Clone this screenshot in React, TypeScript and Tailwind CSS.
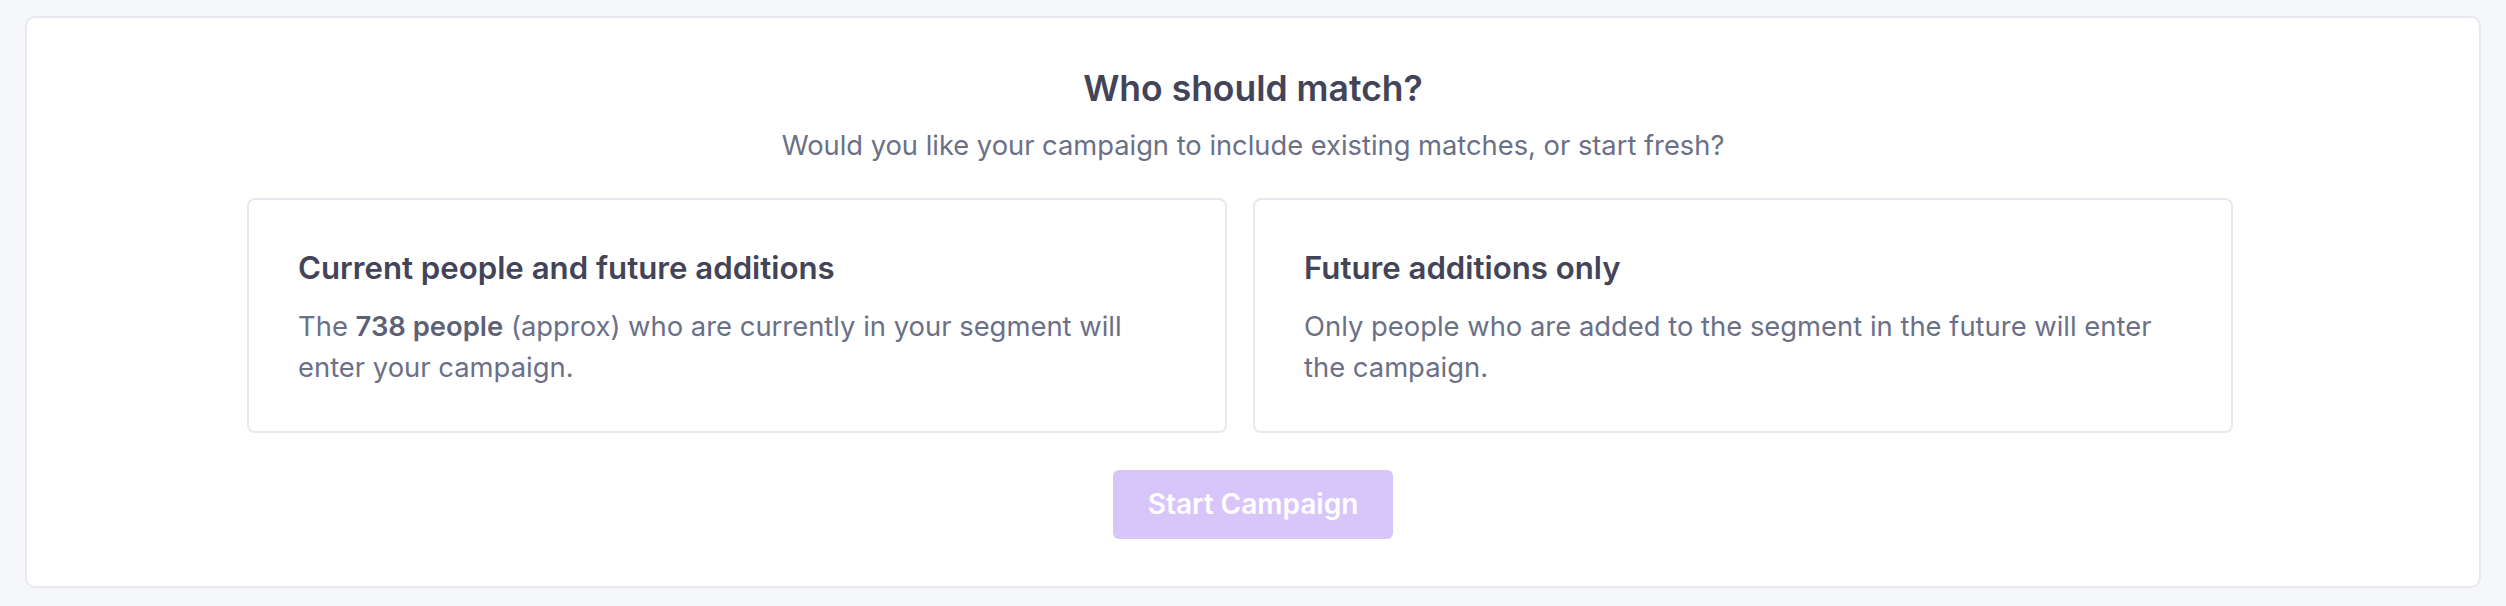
export default function App() {
  return (
    <div className="min-h-screen bg-[#f6f7f9] px-[25px] pt-[16px] pb-[18px] font-['Inter',sans-serif] antialiased">
      <div className="flex flex-col items-center rounded-[10px] border-2 border-[#e8e9ee] bg-white px-[48px] pt-[51px] pb-[47px]">
        {/* Header */}
        <h2 className="text-[35.5px] leading-[40px] font-semibold text-[#434458]">Who should match?</h2>
        <p className="mt-[16px] text-[27.3px] leading-[41.6px] text-[#6b7087]">
          Would you like your campaign to include existing matches, or start fresh?
        </p>

        {/* Options */}
        <div className="mt-[31px] flex w-full justify-center pr-[26px]">
          <div className="grid w-[1986px] grid-cols-2 gap-[26px]">
            <div className="h-[235px] rounded-[8px] border-2 border-[#e8e9ee] px-[49px] pt-[50px]">
              <h3 className="text-[31.2px] leading-[36px] font-semibold text-[#434458]">
                Current people and future additions
              </h3>
              <p className="mt-[20px] whitespace-nowrap text-[27.4px] leading-[41.6px] text-[#6b7087]">
                The <span className="font-semibold text-[#5d6176]">738 people</span> (approx) who are currently in your segment will
                <br />
                enter your campaign.
              </p>
            </div>
            <div className="h-[235px] rounded-[8px] border-2 border-[#e8e9ee] px-[49px] pt-[50px]">
              <h3 className="text-[31.2px] leading-[36px] font-semibold text-[#434458]">Future additions only</h3>
              <p className="mt-[20px] whitespace-nowrap text-[27.4px] leading-[41.6px] text-[#6b7087]">
                Only people who are added to the segment in the future will enter
                <br />
                the campaign.
              </p>
            </div>
          </div>
        </div>

        <button
          disabled
          className="mt-[37px] h-[69px] w-[280px] rounded-[6px] bg-[#d8c6fb] text-[28px] font-semibold text-white"
        >
          Start Campaign
        </button>
      </div>
    </div>
  )
}
